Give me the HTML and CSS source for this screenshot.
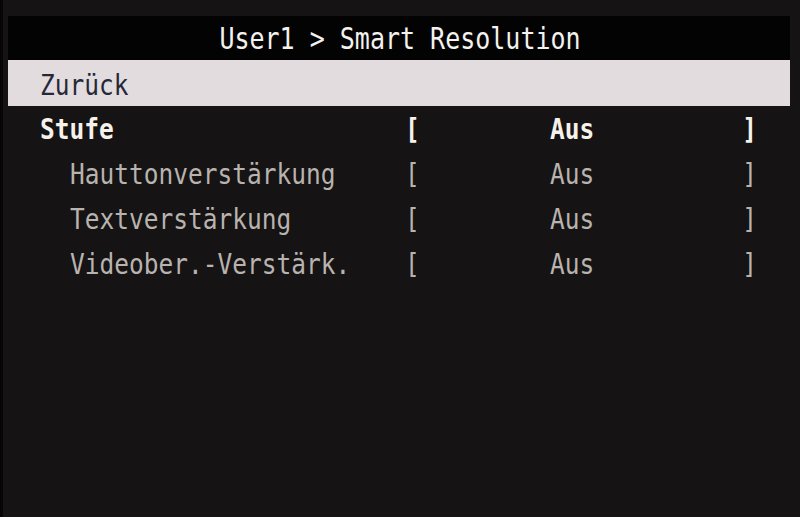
FILE: index.html
```html
<!doctype html>
<html lang="de">
  <head>
    <meta charset="UTF-8" />
    <title>User1 &gt; Smart Resolution</title>
    <link rel="stylesheet" href="styles.css">
  </head>
  <body>
    <div class="osd">
      <div class="title"><span class="txt">User1 &gt; Smart Resolution</span></div>
      <div class="back"><span class="txt">Zurück</span></div>
      <div class="list">
        <div class="row active">
          <span class="label"><span class="txt">Stufe</span></span>
          <span class="value">
            <span class="txt">[</span>
            <span class="txt">Aus</span>
            <span class="txt end">]</span>
          </span>
        </div>
        <div class="row sub">
          <span class="label"><span class="txt">Hauttonverstärkung</span></span>
          <span class="value">
            <span class="txt">[</span>
            <span class="txt">Aus</span>
            <span class="txt end">]</span>
          </span>
        </div>
        <div class="row sub">
          <span class="label"><span class="txt">Textverstärkung</span></span>
          <span class="value">
            <span class="txt">[</span>
            <span class="txt">Aus</span>
            <span class="txt end">]</span>
          </span>
        </div>
        <div class="row sub">
          <span class="label"><span class="txt">Videober.-Verstärk.</span></span>
          <span class="value">
            <span class="txt">[</span>
            <span class="txt">Aus</span>
            <span class="txt end">]</span>
          </span>
        </div>
      </div>
    </div>
  </body>
</html>
```

FILE: styles.css
```css
html,
body {
  margin: 0;
  height: 100%;
}

body {
  background-color: #151313;
  font-family: "DejaVu Sans Mono", "Liberation Mono", monospace;
  font-size: 24.5px;
  color: #b9b3af;
  border-left: 3px solid #070505;
  box-sizing: border-box;
  overflow: hidden;
}

.osd {
  padding: 16px 10px 0 5px;
}

.txt {
  display: inline-block;
  transform: scaleY(1.18);
}

.title {
  height: 44px;
  background-color: #030303;
  color: #f4f2ee;
  font-size: 25px;
  display: flex;
  align-items: center;
  justify-content: center;
  padding-left: 2px;
}

.back {
  height: 46px;
  background-color: #e3dcdf;
  color: #262837;
  display: flex;
  align-items: center;
  padding-left: 32px;
  padding-top: 2px;
  box-sizing: border-box;
}

.row {
  height: 45px;
  display: grid;
  grid-template-columns: 365px 352px;
  align-items: center;
  padding-left: 32px;
}

.row.sub .label {
  padding-left: 30px;
}

.row.active {
  color: #f6f1ea;
  font-weight: bold;
}

.value {
  display: grid;
  grid-template-columns: 145px auto 1fr;
}

.value .end {
  justify-self: end;
}
```
